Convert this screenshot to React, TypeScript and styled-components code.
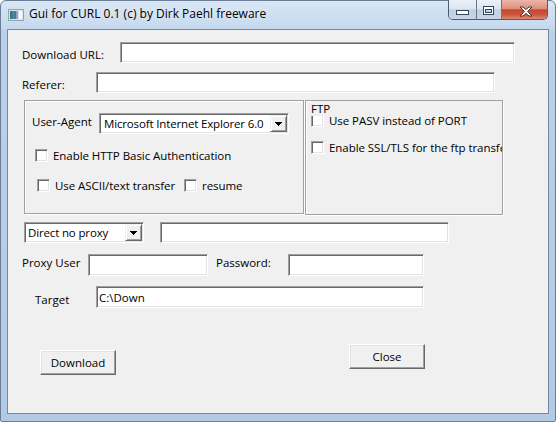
import React from "react";
import styled, { createGlobalStyle } from "styled-components";

const GlobalStyle = createGlobalStyle`
  html, body {
    margin: 0;
    padding: 0;
    background: #ffffff;
  }
  body {
    font-family: "Open Sans", "Liberation Sans", sans-serif;
    font-size: 11.5px;
    color: #000;
  }
`;

const Window = styled.div`
  width: 556px;
  height: 422px;
  box-sizing: border-box;
  display: flex;
  flex-direction: column;
  padding: 0 6px 7px;
  border: 1px solid #6a7f97;
  border-radius: 6px 6px 2px 2px;
  background: linear-gradient(
    to bottom,
    #d9e6f4 0,
    #c4d8ee 28px,
    #bbd1ea 29px,
    #b2cae6 100%
  );
`;

const TitleBar = styled.div`
  height: 28px;
  flex-shrink: 0;
  display: flex;
  align-items: flex-start;
`;

const AppIcon = styled.svg`
  margin: 8px 0 0 1px;
  flex-shrink: 0;
`;

const Title = styled.span`
  margin: 5px 0 0 5px;
  font-size: 12px;
  line-height: 16px;
  white-space: nowrap;
  text-shadow: 0 0 6px rgba(255, 255, 255, 0.9);
`;

const CaptionGroup = styled.div`
  margin: -1px 1px 0 auto;
  height: 19px;
  display: flex;
  border: 1px solid #4d5d72;
  border-top: none;
  border-radius: 0 0 5px 5px;
  overflow: hidden;
`;

const CaptionButton = styled.div<{ $w: number; $close?: boolean; $top: number; $left?: number }>`
  width: ${(p) => p.$w}px;
  display: flex;
  justify-content: center;
  align-items: flex-start;
  padding: ${(p) => p.$top}px 0 0 ${(p) => p.$left ?? 0}px;
  box-sizing: border-box;
  background: ${(p) =>
    p.$close
      ? "linear-gradient(to bottom, #ebb6a8 0%, #dc917d 45%, #c8452e 52%, #cc5840 78%, #e08a72 100%)"
      : "linear-gradient(to bottom, #eaf1f8 0%, #dce6f1 45%, #c2d0e1 52%, #c8d5e5 100%)"};
  & + & {
    border-left: 1px solid #66778c;
  }
`;

const Client = styled.div`
  flex: 1;
  min-height: 0;
  background: #f0f0f0;
  border: 1px solid #7488a0;
  display: flex;
  flex-direction: column;
`;

const Row = styled.div<{ $top: number; $left: number }>`
  display: flex;
  align-items: center;
  margin-top: ${(p) => p.$top}px;
  padding-left: ${(p) => p.$left}px;
`;

const TopRow = styled(Row)`
  align-items: flex-start;
`;

const Label = styled.span<{ $w: number; $dy?: number; $gapLeft?: number }>`
  width: ${(p) => p.$w}px;
  flex-shrink: 0;
  margin-left: ${(p) => p.$gapLeft ?? 0}px;
  line-height: 15px;
  white-space: nowrap;
  padding: ${(p) =>
    (p.$dy ?? 0) >= 0 ? `${2 * (p.$dy ?? 0)}px 0 0` : `0 0 ${-2 * (p.$dy ?? 0)}px`};
`;

const TextField = styled.input<{ $w: number; $h?: number; $gapLeft?: number }>`
  width: ${(p) => p.$w}px;
  height: ${(p) => p.$h ?? 21}px;
  margin: 0 0 0 ${(p) => p.$gapLeft ?? 0}px;
  flex-shrink: 0;
  box-sizing: border-box;
  padding: 0 0 0 2px;
  font: inherit;
  color: #000;
  background: #fff;
  outline: none;
  border: 1px solid;
  border-color: #a0a0a0 #ffffff #ffffff #a0a0a0;
  box-shadow: inset 1px 1px 0 #696969, inset -1px -1px 0 #e3e3e3;
`;

const Combo = styled.div<{ $w: number; $pad: number }>`
  width: ${(p) => p.$w}px;
  height: 21px;
  flex-shrink: 0;
  box-sizing: border-box;
  display: flex;
  align-items: center;
  padding: 1px 1px 1px ${(p) => p.$pad}px;
  background: #fff;
  border: 1px solid;
  border-color: #a0a0a0 #ffffff #ffffff #a0a0a0;
  box-shadow: inset 1px 1px 0 #696969, inset -1px -1px 0 #e3e3e3;
`;

const ComboText = styled.span`
  flex: 1;
  white-space: nowrap;
  overflow: hidden;
  line-height: 15px;
  letter-spacing: -0.15px;
`;

const DropButton = styled.span`
  width: 17px;
  height: 17px;
  flex-shrink: 0;
  box-sizing: border-box;
  display: flex;
  align-items: center;
  justify-content: center;
  background: #f0f0f0;
  border: 1px solid;
  border-color: #f0f0f0 #696969 #696969 #f0f0f0;
  box-shadow: inset 1px 1px 0 #ffffff, inset -1px -1px 0 #a0a0a0;
`;

const GroupRow = styled(TopRow)`
  gap: 1px;
`;

const GroupBox = styled.div<{ $w: number; $h: number; $pad?: number }>`
  width: ${(p) => p.$w}px;
  height: ${(p) => p.$h}px;
  flex-shrink: 0;
  box-sizing: border-box;
  display: flex;
  flex-direction: column;
  padding-left: ${(p) => p.$pad ?? 0}px;
  border: 1px solid #a0a0a0;
  box-shadow: inset 1px 1px 0 #ffffff, 1px 1px 0 #ffffff;
  overflow: hidden;
`;

const GroupCaption = styled.div`
  position: relative;
  z-index: 1;
  height: 15px;
  line-height: 15px;
  margin-bottom: -3px;
  background: #f0f0f0;
`;

const Check = styled.label<{ $w?: number }>`
  display: flex;
  align-items: center;
  gap: 5px;
  height: 15px;
  flex-shrink: 0;
  white-space: nowrap;
  line-height: 15px;
  letter-spacing: -0.05px;
  width: ${(p) => (p.$w ? `${p.$w}px` : "auto")};
`;

const Box = styled.span`
  width: 13px;
  height: 13px;
  flex-shrink: 0;
  box-sizing: border-box;
  background: #fff;
  border: 1px solid;
  border-color: #a0a0a0 #ffffff #ffffff #a0a0a0;
  box-shadow: inset 1px 1px 0 #696969, inset -1px -1px 0 #e3e3e3;
`;

const PushButton = styled.button<{ $top?: number; $left?: number }>`
  width: 76px;
  height: 25px;
  flex-shrink: 0;
  margin: ${(p) => p.$top ?? 0}px 0 0 ${(p) => p.$left ?? 0}px;
  padding: 0;
  box-sizing: border-box;
  font: inherit;
  color: #000;
  background: #f0f0f0;
  border: 1px solid;
  border-color: #ffffff #696969 #696969 #ffffff;
  box-shadow: inset -1px -1px 0 #a0a0a0, inset 1px 1px 0 #e3e3e3;
`;

const Arrow = () => (
  <svg width="7" height="4" viewBox="0 0 7 4">
    <path d="M0 0h7v1h-1v1h-1v1h-1v1h-1v-1h-1v-1h-1v-1h-1z" fill="#000" />
  </svg>
);

function ComboBox({ w, pad, text }: { w: number; pad: number; text: string }) {
  return (
    <Combo $w={w} $pad={pad}>
      <ComboText>{text}</ComboText>
      <DropButton>
        <Arrow />
      </DropButton>
    </Combo>
  );
}

function CheckBox({ label, w }: { label: string; w?: number }) {
  return (
    <Check $w={w}>
      <Box />
      {label}
    </Check>
  );
}

export default function App() {
  return (
    <>
      <GlobalStyle />
      <Window>
        <TitleBar>
          <AppIcon width="16" height="12" viewBox="0 0 16 12">
            <rect x="0.5" y="0.5" width="15" height="11" fill="#dfe4ea" stroke="#97a2ae" />
            <rect x="2" y="2" width="2" height="8" fill="#2f7a6e" />
            <rect x="4" y="2" width="2" height="8" fill="#3f8d86" />
            <rect x="6" y="2" width="2" height="8" fill="#4d72ae" />
            <rect x="8" y="2" width="2" height="8" fill="#86a6cf" />
            <rect x="11" y="2" width="3" height="8" fill="#f5f7f9" />
          </AppIcon>
          <Title>Gui for CURL 0.1 (c) by Dirk Paehl freeware</Title>
          <CaptionGroup>
            <CaptionButton $w={27} $top={10}>
              <svg width="13" height="6" viewBox="0 0 13 6">
                <rect x="0.5" y="0.5" width="12" height="4" fill="#fff" stroke="#34445a" />
              </svg>
            </CaptionButton>
            <CaptionButton $w={25} $top={6}>
              <svg width="12" height="10" viewBox="0 0 12 10">
                <rect x="0.5" y="0.5" width="10" height="8" fill="#fff" stroke="#34445a" />
                <rect x="2.5" y="3.5" width="6" height="3" fill="#c7d4e4" stroke="#34445a" />
              </svg>
            </CaptionButton>
            <CaptionButton $w={46} $top={6} $left={3} $close>
              <svg width="14" height="11" viewBox="0 0 14 11">
                <polygon
                  points="1,1 4,1 7,3.5 10,1 13,1 8.5,5.5 13,10 10,10 7,7.5 4,10 1,10 5.5,5.5"
                  fill="#fff"
                  stroke="#4a3430"
                  strokeWidth="1"
                  strokeLinejoin="round"
                />
              </svg>
            </CaptionButton>
          </CaptionGroup>
        </TitleBar>

        <Client>
          <Row $top={12} $left={14}>
            <Label $w={98} $dy={2}>Download URL:</Label>
            <TextField $w={395} readOnly defaultValue="" />
          </Row>

          <Row $top={9} $left={14}>
            <Label $w={74} $dy={2}>Referer:</Label>
            <TextField $w={399} readOnly defaultValue="" />
          </Row>

          <GroupRow $top={7} $left={16}>
            <GroupBox $w={280} $h={114}>
              <Row $top={12} $left={7}>
                <Label $w={67} $dy={-2}>User-Agent</Label>
                <ComboBox w={190} pad={4} text="Microsoft Internet Explorer 6.0" />
              </Row>
              <Row $top={14} $left={10}>
                <CheckBox label="Enable HTTP Basic Authentication" />
              </Row>
              <Row $top={15} $left={12}>
                <CheckBox label="Use ASCII/text transfer" w={147} />
                <CheckBox label="resume" />
              </Row>
            </GroupBox>

            <GroupBox $w={198} $h={115} $pad={5}>
              <GroupCaption>FTP</GroupCaption>
              <CheckBox label="Use PASV instead of PORT" />
              <Row $top={12} $left={0}>
                <CheckBox label="Enable SSL/TLS for the ftp transfer" />
              </Row>
            </GroupBox>
          </GroupRow>

          <Row $top={7} $left={16}>
            <ComboBox w={120} pad={3} text="Direct no proxy" />
            <TextField $w={289} $gapLeft={16} readOnly defaultValue="" />
          </Row>

          <Row $top={11} $left={14}>
            <Label $w={66} $dy={-3}>Proxy User</Label>
            <TextField $w={120} $h={22} readOnly defaultValue="" />
            <Label $w={72} $dy={-3} $gapLeft={8}>Password:</Label>
            <TextField $w={136} $h={22} readOnly defaultValue="" />
          </Row>

          <Row $top={10} $left={27}>
            <Label $w={61} $dy={2}>Target</Label>
            <TextField $w={328} $h={22} readOnly defaultValue="C:\Down" />
          </Row>

          <TopRow $top={36} $left={32}>
            <PushButton $top={6}>Download</PushButton>
            <PushButton $left={233}>Close</PushButton>
          </TopRow>
        </Client>
      </Window>
    </>
  );
}
